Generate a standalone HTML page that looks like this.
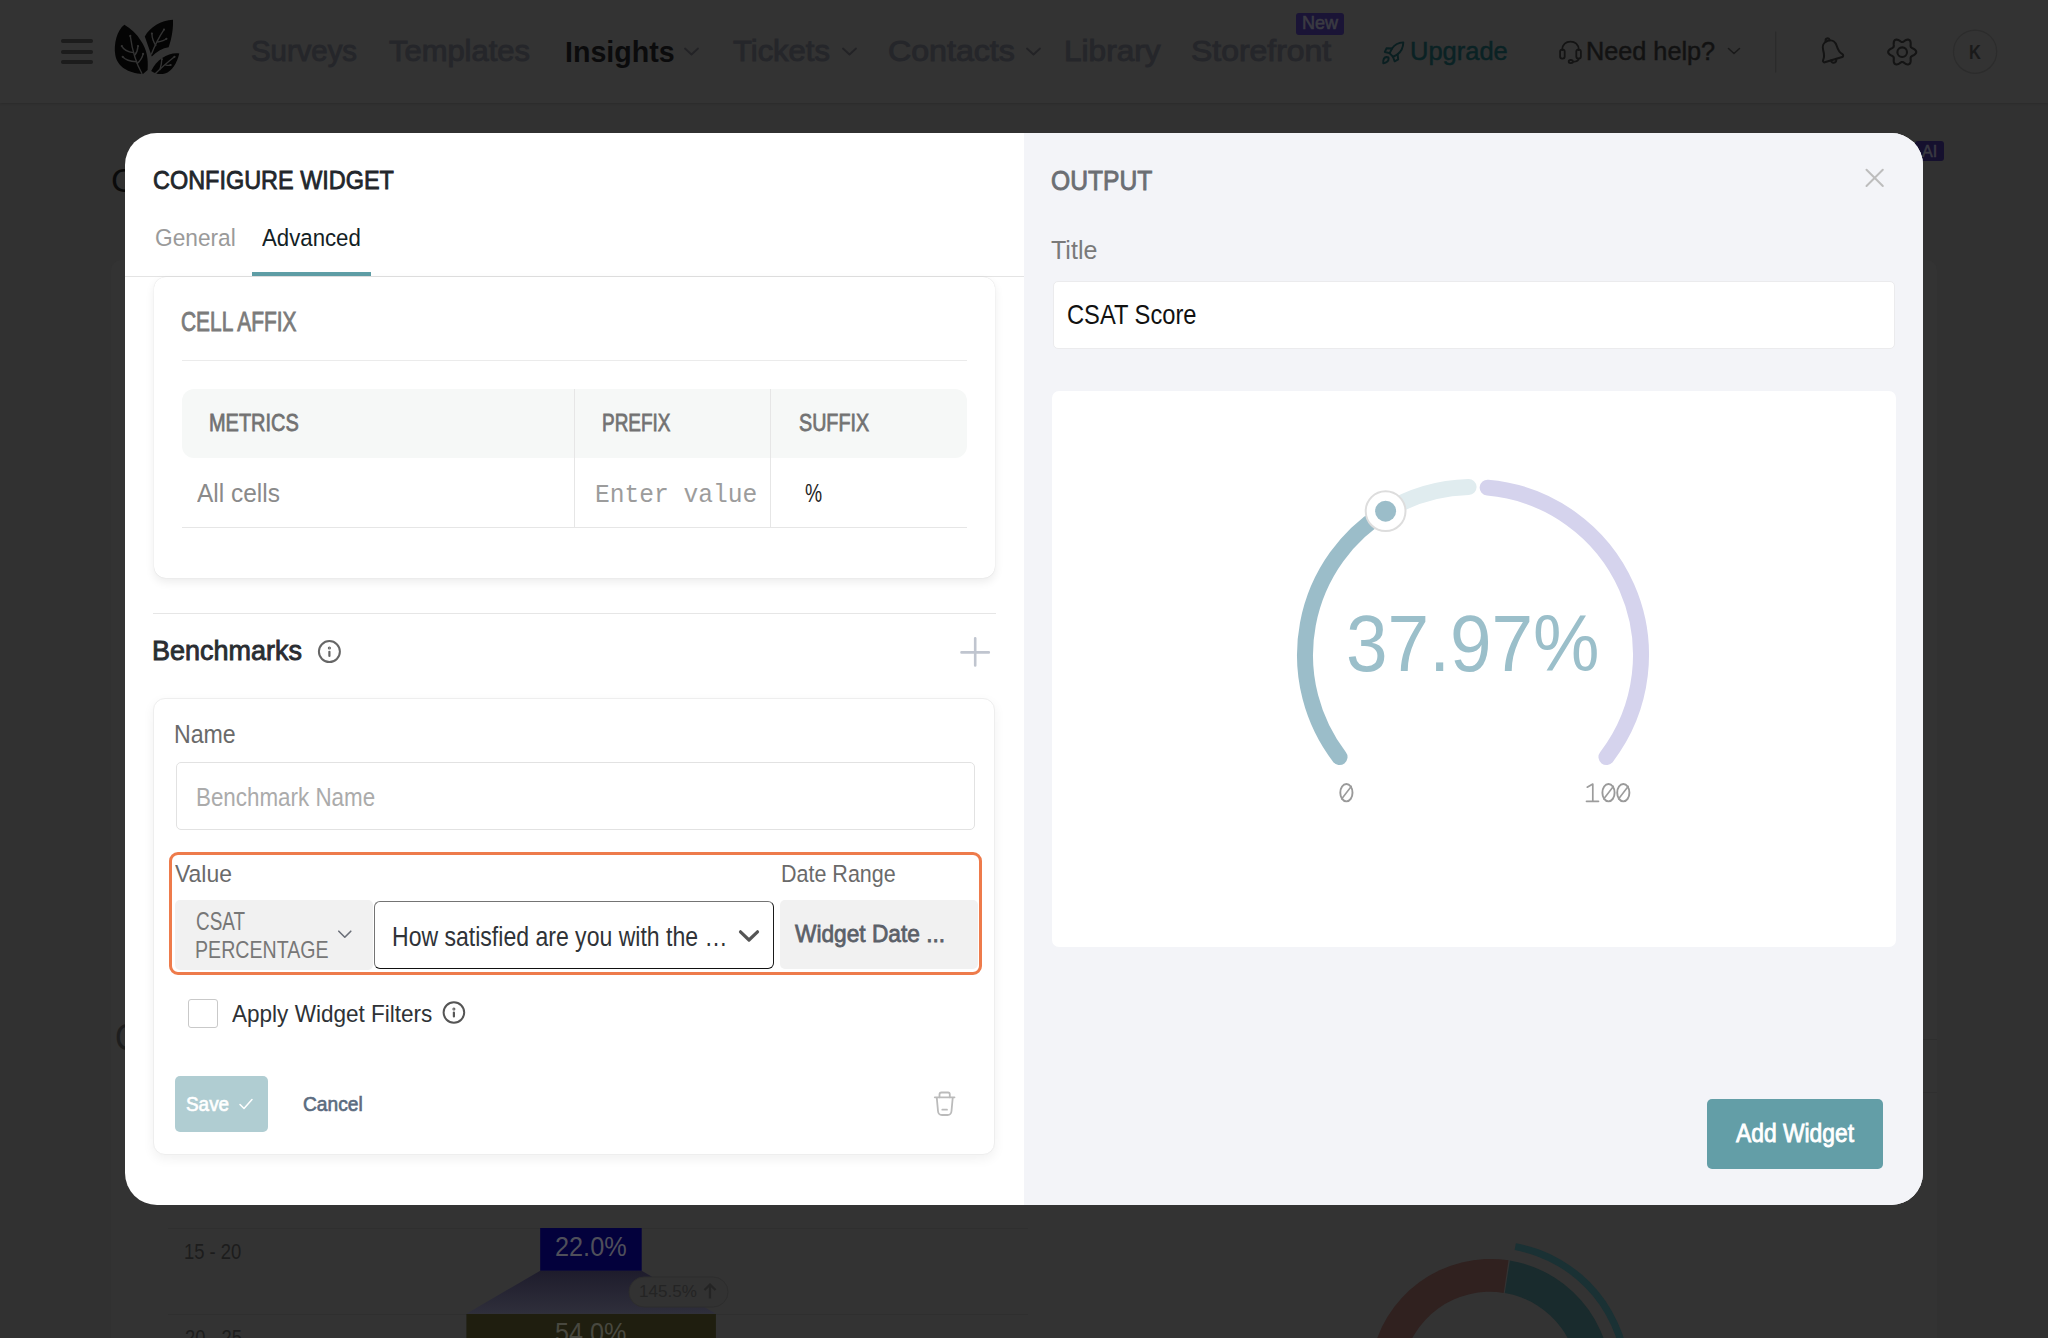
<!DOCTYPE html>
<html><head><meta charset="utf-8">
<style>
html,body{margin:0;padding:0;}
body{width:2048px;height:1338px;overflow:hidden;position:relative;background:#313131;font-family:"Liberation Sans",sans-serif;}
.a{position:absolute;box-sizing:border-box;}
.t{position:absolute;white-space:pre;line-height:1;transform-origin:0 0;}
svg.a{overflow:visible;}
</style></head><body>
<!-- ===== background page (under overlay) ===== -->
<div class="a" style="left:0;top:0;width:2048px;height:103px;background:#333333;box-shadow:0 1px 2px rgba(0,0,0,0.12)"></div>
<div class="a" style="left:111px;top:260px;width:1826px;height:1090px;background:#333333;border-radius:10px"></div>
<div class="a" style="left:1923px;top:1039px;width:14px;height:1px;background:#2e2e2e"></div>
<div class="a" style="left:1923px;top:1092px;width:14px;height:1px;background:#2f2f2f"></div>
<!-- hamburger -->
<div class="a" style="left:61px;top:39px;width:32px;height:4px;border-radius:2px;background:#1c1c1c"></div>
<div class="a" style="left:61px;top:49.5px;width:32px;height:4px;border-radius:2px;background:#1c1c1c"></div>
<div class="a" style="left:61px;top:60px;width:32px;height:4px;border-radius:2px;background:#1c1c1c"></div>
<!-- logo -->
<svg class="a" style="left:0;top:0" width="2048" height="103" viewBox="0 0 2048 103">
 <g fill="#040404">
  <path d="M124.4,24.7 C117,30 113.5,44 115.3,55 C117,66 128,73.5 143,74 L147.6,70 C148.5,58 146.5,49 141,41 C137,34 131,28.5 124.4,24.7 Z"/>
  <path d="M173,19.8 C161,20.5 150,27 144.8,36.5 L151.8,56.5 C157,51 162.5,48 168.6,47.2 C172,38 173.3,28 173,19.8 Z"/>
  <path d="M179.3,53.4 C169,52 157,58.5 151.2,71 C155,74 160,74.8 165,73.5 C172,71 177,63 179.3,53.4 Z"/>
 </g>
 <g stroke="#333" stroke-width="1.4" fill="none" stroke-linecap="round">
  <path d="M141.9,73.5 Q133.2,58 130.3,36"/>
  <path d="M133.5,52.6 C128,52 123.5,49.5 121.8,46.1"/>
  <path d="M136.5,61.8 C130,61.5 125,59.5 122.7,56.8"/>
  <path d="M134.6,55.3 C136.5,53 137.8,49.5 138,46.1"/>
  <path d="M137.2,63.6 C140,61 142.5,57 143.1,53.9"/>
  <path d="M151.5,54 C155,45 159,37 164,29.6"/>
  <path d="M155.8,45.5 C153.5,42 152,37.5 151.9,33.5"/>
  <path d="M157.8,42 C161,41.5 164.5,40.5 166.4,38.8"/>
  <path d="M155.5,73.5 C162,67 168,62 174.5,56.8"/>
  <path d="M159.9,69.6 C161,66 161.8,62 161.8,59.2"/>
  <path d="M165.5,64.8 C167.5,65.5 169.2,65.5 170.6,65"/>
 </g>
 <g fill="#333">
  <circle cx="130.3" cy="35.9" r="1.1"/><circle cx="121.8" cy="46.1" r="1.1"/><circle cx="122.7" cy="56.8" r="1.1"/>
  <circle cx="138" cy="46.1" r="1.1"/><circle cx="143.1" cy="53.9" r="1.1"/><circle cx="151.9" cy="33.5" r="1.1"/>
  <circle cx="164" cy="29.6" r="1.1"/><circle cx="166.4" cy="38.8" r="1.1"/><circle cx="174.5" cy="56.8" r="1.1"/>
  <circle cx="161.8" cy="59.2" r="1.1"/><circle cx="170.6" cy="65" r="1.1"/>
 </g>
</svg>
<!-- nav chevrons -->
<svg class="a" style="left:0;top:0" width="2048" height="103" viewBox="0 0 2048 103" fill="none" stroke-linecap="round" stroke-linejoin="round">
 <path d="M685,48.5 L691.5,54.5 L698,48.5" stroke="#232326" stroke-width="1.8"/>
 <path d="M843,48.5 L849.5,54.5 L856,48.5" stroke="#232326" stroke-width="1.8"/>
 <path d="M1027,48.5 L1033.5,54.5 L1040,48.5" stroke="#232326" stroke-width="1.8"/>
 <path d="M1728.5,48.5 L1734,53.5 L1739.5,48.5" stroke="#1a1a1a" stroke-width="1.6"/>
 <!-- rocket -->
 <g stroke="#0a1f21" stroke-width="1.9">
  <path d="M1403.3,42.4 C1398,42.6 1394.5,45 1392,48.5 L1389.6,53.2 L1393,56.8 L1397.6,54.3 C1401,51.5 1403.2,47.5 1403.3,42.4 Z"/>
  <path d="M1392,48.5 L1386.6,48.2 L1384.8,52 L1389.6,53.2"/>
  <path d="M1397.6,54.3 L1398.2,59.3 L1394.6,61.3 L1393,56.8"/>
  <path d="M1388.6,58.4 C1388.6,60.6 1387.2,62.6 1383.2,63.2 C1383,59.6 1384.6,57.2 1386.6,57 C1387.8,57 1388.6,57.6 1388.6,58.4 Z"/>
 </g>
 <!-- headset -->
 <g stroke="#141414" stroke-width="1.8">
  <path d="M1562.3,50 L1562.3,49.5 C1562.3,44.5 1566,41.6 1570.5,41.6 C1575,41.6 1578.7,44.5 1578.7,49.5 L1578.7,50"/>
  <rect x="1560.1" y="49.6" width="4.6" height="9" rx="2"/>
  <rect x="1576.3" y="49.6" width="4.6" height="9" rx="2"/>
  <path d="M1578.6,58.6 C1578.6,60.8 1576.5,61.8 1573,61.8"/>
  <ellipse cx="1570.8" cy="61.6" rx="2.1" ry="1.6"/>
 </g>
 <!-- divider -->
 <rect x="1775" y="31.6" width="1.2" height="41" fill="#2b2b2b" stroke="none"/>
 <!-- bell -->
 <g stroke="#141414" stroke-width="1.9" transform="translate(1830.8,50.8) rotate(-17) scale(1.05)">
  <path d="M0,-10 C-4.5,-10 -6.8,-6.5 -6.8,-2.5 C-6.8,1.5 -7.8,4.3 -9.6,6.3 C-10.4,7.2 -9.9,8.8 -8.7,8.8 L8.7,8.8 C9.9,8.8 10.4,7.2 9.6,6.3 C7.8,4.3 6.8,1.5 6.8,-2.5 C6.8,-6.5 4.5,-10 0,-10 Z"/>
  <path d="M-2,-9.9 C-2,-11.2 -1.1,-12.3 0,-12.3 C1.1,-12.3 2,-11.2 2,-9.9"/>
  <path d="M-2.6,8.9 C-2.6,10.5 -1.4,11.8 0,11.8 C1.4,11.8 2.6,10.5 2.6,8.9"/>
 </g>
 <!-- gear -->
 <g stroke="#141414" stroke-width="2.1">
  <path d="M1916.20,52.00 L1916.08,52.73 L1915.74,53.42 L1915.21,54.06 L1914.54,54.62 L1913.79,55.11 L1913.02,55.52 L1912.31,55.88 L1911.68,56.22 L1911.20,56.58 L1910.86,57.00 L1910.67,57.50 L1910.60,58.10 L1910.61,58.81 L1910.66,59.62 L1910.69,60.49 L1910.64,61.38 L1910.49,62.24 L1910.20,63.02 L1909.77,63.66 L1909.20,64.12 L1908.51,64.39 L1907.74,64.44 L1906.92,64.30 L1906.10,64.00 L1905.31,63.59 L1904.57,63.13 L1903.89,62.69 L1903.29,62.33 L1902.73,62.08 L1902.20,62.00 L1901.67,62.08 L1901.11,62.33 L1900.51,62.69 L1899.83,63.13 L1899.09,63.59 L1898.30,64.00 L1897.48,64.30 L1896.66,64.44 L1895.89,64.39 L1895.20,64.12 L1894.63,63.66 L1894.20,63.02 L1893.91,62.24 L1893.76,61.38 L1893.71,60.49 L1893.74,59.62 L1893.79,58.81 L1893.80,58.10 L1893.73,57.50 L1893.54,57.00 L1893.20,56.58 L1892.72,56.22 L1892.09,55.88 L1891.38,55.52 L1890.61,55.11 L1889.86,54.62 L1889.19,54.06 L1888.66,53.42 L1888.32,52.73 L1888.20,52.00 L1888.32,51.27 L1888.66,50.58 L1889.19,49.94 L1889.86,49.38 L1890.61,48.89 L1891.38,48.48 L1892.09,48.12 L1892.72,47.78 L1893.20,47.42 L1893.54,47.00 L1893.73,46.50 L1893.80,45.90 L1893.79,45.19 L1893.74,44.38 L1893.71,43.51 L1893.76,42.62 L1893.91,41.76 L1894.20,40.98 L1894.63,40.34 L1895.20,39.88 L1895.89,39.61 L1896.66,39.56 L1897.48,39.70 L1898.30,40.00 L1899.09,40.41 L1899.83,40.87 L1900.51,41.31 L1901.11,41.67 L1901.67,41.92 L1902.20,42.00 L1902.73,41.92 L1903.29,41.67 L1903.89,41.31 L1904.57,40.87 L1905.31,40.41 L1906.10,40.00 L1906.92,39.70 L1907.74,39.56 L1908.51,39.61 L1909.20,39.88 L1909.77,40.34 L1910.20,40.98 L1910.49,41.76 L1910.64,42.62 L1910.69,43.51 L1910.66,44.38 L1910.61,45.19 L1910.60,45.90 L1910.67,46.50 L1910.86,47.00 L1911.20,47.42 L1911.68,47.78 L1912.31,48.12 L1913.02,48.48 L1913.79,48.89 L1914.54,49.38 L1915.21,49.94 L1915.74,50.58 L1916.08,51.27 Z"/>
  <circle cx="1902.2" cy="52.2" r="4.8"/>
 </g>
 <!-- avatar -->
 <circle cx="1975.1" cy="51.7" r="21.6" stroke="#2c2c2c" stroke-width="1.2" fill="#333333"/>
</svg>
<!-- New badge -->
<div class="a" style="left:1296px;top:13.2px;width:48.3px;height:21.7px;border-radius:3px;background:#1a1436"></div>
<!-- AI badge -->
<div class="a" style="left:1915px;top:141px;width:29px;height:20px;border-radius:3px;background:#15102e"></div>
<!-- bottom-left table -->
<div class="a" style="left:168px;top:1227.5px;width:860px;height:1px;background:#2f2f2f"></div>
<div class="a" style="left:168px;top:1313.5px;width:860px;height:1px;background:#2f2f2f"></div>
<svg class="a" style="left:0;top:0" width="2048" height="1338" viewBox="0 0 2048 1338">
 <defs>
  <linearGradient id="fun" x1="0" y1="0" x2="0" y2="1">
   <stop offset="0" stop-color="#1e1c2c"/><stop offset="1" stop-color="#2f2f3b"/>
  </linearGradient>
 </defs>
 <path d="M540.2,1270.7 L641.7,1270.7 L715.9,1313.8 L466.4,1313.8 Z" fill="url(#fun)"/>
 <rect x="540.2" y="1228" width="101.5" height="42.7" fill="#03013c"/>
 <rect x="466.4" y="1314" width="249.5" height="30" fill="#1f1e0f"/>
 <rect x="629" y="1277" width="99" height="30" rx="15" fill="#323232" stroke="#2d2d2d" stroke-width="1"/>
 <path d="M710,1298.5 L710,1284.5 M704.5,1290 L710,1284.5 L715.5,1290" stroke="#242424" stroke-width="2.2" fill="none"/>
 <!-- donut -->
 <path d="M1470.0,1499.2 A121,121 0 0 1 1508.5,1260.3 L1503.7,1292.9 A88,88 0 0 0 1475.7,1466.7 Z" fill="#30211f"/>
 <path d="M1509.9,1260.5 A121,121 0 1 1 1470.0,1499.2 L1475.7,1466.7 A88,88 0 1 0 1504.8,1293.1 Z" fill="#192b2d"/>
 <path d="M1515.9,1243.2 A139,139 0 0 1 1515.1,1516.9 L1513.9,1510.0 A132,132 0 0 0 1514.6,1250.1 Z" fill="#1a3134"/>
</svg>

<span class="t" style="left:251.2px;top:37.0px;font-size:29.07px;font-weight:400;color:#25262a;font-family:'Liberation Sans',sans-serif;transform:scaleX(1.0096);-webkit-text-stroke:0.93px #25262a">Surveys</span>
<span class="t" style="left:388.9px;top:37.0px;font-size:29.07px;font-weight:400;color:#25262a;font-family:'Liberation Sans',sans-serif;transform:scaleX(1.0636);-webkit-text-stroke:0.93px #25262a">Templates</span>
<span class="t" style="left:565.1px;top:38.0px;font-size:29.07px;font-weight:700;color:#0b0b0c;font-family:'Liberation Sans',sans-serif;transform:scaleX(0.9843)">Insights</span>
<span class="t" style="left:732.5px;top:37.0px;font-size:29.07px;font-weight:400;color:#25262a;font-family:'Liberation Sans',sans-serif;transform:scaleX(1.0648);-webkit-text-stroke:0.93px #25262a">Tickets</span>
<span class="t" style="left:887.7px;top:37.0px;font-size:29.07px;font-weight:400;color:#25262a;font-family:'Liberation Sans',sans-serif;transform:scaleX(1.1062);-webkit-text-stroke:0.93px #25262a">Contacts</span>
<span class="t" style="left:1063.8px;top:37.0px;font-size:29.07px;font-weight:400;color:#25262a;font-family:'Liberation Sans',sans-serif;transform:scaleX(1.0874);-webkit-text-stroke:0.93px #25262a">Library</span>
<span class="t" style="left:1191.4px;top:37.0px;font-size:29.07px;font-weight:400;color:#25262a;font-family:'Liberation Sans',sans-serif;transform:scaleX(1.0984);-webkit-text-stroke:0.93px #25262a">Storefront</span>
<span class="t" style="left:1301.9px;top:13.8px;font-size:18.17px;font-weight:400;color:#3b3b42;font-family:'Liberation Sans',sans-serif;transform:scaleX(0.9917);-webkit-text-stroke:0.58px #3b3b42">New</span>
<span class="t" style="left:1409.5px;top:39.8px;font-size:24.85px;font-weight:400;color:#0a2224;font-family:'Liberation Sans',sans-serif;transform:scaleX(1.0258);-webkit-text-stroke:0.45px #0a2224">Upgrade</span>
<span class="t" style="left:1586.4px;top:39.8px;font-size:24.85px;font-weight:400;color:#121212;font-family:'Liberation Sans',sans-serif;transform:scaleX(1.0160);-webkit-text-stroke:0.45px #121212">Need help?</span>
<span class="t" style="left:1968.9px;top:41.8px;font-size:20.93px;font-weight:700;color:#1a1a1a;font-family:'Liberation Sans',sans-serif;transform:scaleX(0.7857)">K</span>
<span class="t" style="left:1922.0px;top:144.1px;font-size:15.7px;font-weight:400;color:#3a3a42;font-family:'Liberation Sans',sans-serif;transform:scaleX(1.0286);-webkit-text-stroke:0.5px #3a3a42">AI</span>
<span class="t" style="left:110.9px;top:165.0px;font-size:32.7px;font-weight:400;color:#0a0a0a;font-family:'Liberation Sans',sans-serif;transform:scaleX(1.0500)">C</span>
<span class="t" style="left:115.2px;top:1020.0px;font-size:36.34px;font-weight:400;color:#1e1e1e;font-family:'Liberation Sans',sans-serif;transform:scaleX(0.9130)">C</span>
<span class="t" style="left:183.7px;top:1240.8px;font-size:21.95px;font-weight:400;color:#1c1c1c;font-family:'Liberation Sans',sans-serif;transform:scaleX(0.8394)">15 - 20</span>
<span class="t" style="left:555.1px;top:1233.4px;font-size:27.33px;font-weight:400;color:#4f4f5a;font-family:'Liberation Sans',sans-serif;transform:scaleX(0.9250)">22.0%</span>
<span class="t" style="left:639.4px;top:1283.2px;font-size:17.3px;font-weight:400;color:#242424;font-family:'Liberation Sans',sans-serif;transform:scaleX(0.9895)">145.5%</span>
<span class="t" style="left:184.6px;top:1327.0px;font-size:21.8px;font-weight:400;color:#1c1c1c;font-family:'Liberation Sans',sans-serif;transform:scaleX(0.8394)">20 - 25</span>
<span class="t" style="left:555.1px;top:1319.0px;font-size:27.62px;font-weight:400;color:#48483f;font-family:'Liberation Sans',sans-serif;transform:scaleX(0.9130)">54.0%</span>
<!-- ===== modal ===== -->
<div class="a" style="left:125px;top:133px;width:1798px;height:1072px;border-radius:32px;overflow:hidden;background:#ffffff">
 <div class="a" style="left:899px;top:0;width:899px;height:1072px;background:#f3f4f8"></div>
</div>
<!-- left panel -->
<div class="a" style="left:125px;top:276px;width:899px;height:1px;background:#e4e4e4"></div>
<div class="a" style="left:252px;top:272px;width:118.7px;height:4px;background:#5f9ea6"></div>
<!-- cell affix card -->
<div class="a" style="left:153.6px;top:276.6px;width:841.4px;height:301px;border-radius:12px;background:#fff;box-shadow:0 0 1px rgba(0,0,0,0.16),0 4px 10px rgba(0,0,0,0.08)"></div>
<div class="a" style="left:182px;top:360px;width:784.5px;height:1px;background:#ebebeb"></div>
<div class="a" style="left:182px;top:388.6px;width:784.5px;height:69.4px;border-radius:12px;background:#f6f8f7"></div>
<div class="a" style="left:574px;top:388.6px;width:1px;height:138.4px;background:#e6e6e6"></div>
<div class="a" style="left:770px;top:388.6px;width:1px;height:138.4px;background:#e6e6e6"></div>
<div class="a" style="left:182px;top:526.5px;width:784.5px;height:1px;background:#e6e6e6"></div>
<!-- benchmarks -->
<div class="a" style="left:153px;top:612.5px;width:843px;height:1px;background:#e6e6e6"></div>
<svg class="a" style="left:0;top:0" width="2048" height="1338" viewBox="0 0 2048 1338" fill="none" stroke-linecap="round" stroke-linejoin="round">
 <circle cx="329.4" cy="651.6" r="10.5" stroke="#666" stroke-width="2"/>
 <circle cx="329.4" cy="648" r="0.6" stroke="#666" stroke-width="2"/>
 <path d="M329.4,651.8 L329.4,656" stroke="#666" stroke-width="2.2"/>
 <path d="M961.5,652.4 L988.8,652.4 M975.2,638.3 L975.2,665.5" stroke="#c0c5cf" stroke-width="2.6"/>
</svg>
<div class="a" style="left:152.7px;top:697.8px;width:842.3px;height:457.2px;border-radius:12px;background:#fff;border:1px solid #eeeeee;box-shadow:0 4px 12px rgba(0,0,0,0.06)"></div>
<div class="a" style="left:175.5px;top:762.3px;width:799px;height:68.1px;border-radius:5px;background:#fff;border:1px solid #e2e2e2"></div>
<div class="a" style="left:169px;top:852.3px;width:812.8px;height:123px;border-radius:9px;border:3px solid #ee7b4b"></div>
<div class="a" style="left:174.7px;top:900.4px;width:198px;height:69.3px;border-radius:5px;background:#f1f1f1"></div>
<div class="a" style="left:373.9px;top:901px;width:399.7px;height:67.8px;border-radius:6px;background:#fff;border:1.7px solid;border-color:#747474 #1a1a1a #111 #747474"></div>
<div class="a" style="left:780px;top:900.4px;width:198.2px;height:68.9px;border-radius:5px;background:#f1f1f1"></div>
<div class="a" style="left:188.2px;top:999.2px;width:29.5px;height:28.5px;border-radius:3px;background:#fff;border:1px solid #c9c9c9"></div>
<div class="a" style="left:174.9px;top:1076.2px;width:93px;height:55.8px;border-radius:5px;background:#b0cdd2"></div>
<svg class="a" style="left:0;top:0" width="2048" height="1338" viewBox="0 0 2048 1338" fill="none" stroke-linecap="round" stroke-linejoin="round">
 <path d="M338.8,931.2 L344.8,937.2 L350.8,931.2" stroke="#6b6f78" stroke-width="1.6"/>
 <path d="M740.5,931.8 L749,940 L757.5,931.8" stroke="#555" stroke-width="3.2"/>
 <circle cx="453.9" cy="1012.5" r="10.3" stroke="#555" stroke-width="2"/>
 <circle cx="453.9" cy="1009" r="0.5" stroke="#555" stroke-width="2"/>
 <path d="M453.9,1012.5 L453.9,1016.5" stroke="#555" stroke-width="2.2"/>
 <path d="M240,1104.5 L244,1108.5 L252,1099.5" stroke="#fff" stroke-width="1.5"/>
 <!-- trash -->
 <g stroke="#bbbbbb" stroke-width="1.8">
  <path d="M934.8,1097.3 L954.5,1097.3"/>
  <path d="M939.5,1097.3 L939.5,1094.5 C939.5,1093 940.5,1092.5 941.5,1092.5 L948,1092.5 C949,1092.5 949.8,1093 949.8,1094.5 L949.8,1097.3"/>
  <path d="M936.8,1098 L938,1111 C938.2,1113.5 939.5,1115 942,1115 L947.5,1115 C950,1115 951.3,1113.5 951.5,1111 L952.7,1098"/>
  <path d="M942.3,1109.7 L947,1109.7"/>
 </g>
 <!-- close X -->
 <path d="M1866.5,169.7 L1882.8,186 M1882.8,169.7 L1866.5,186" stroke="#bdbdbd" stroke-width="2"/>
</svg>
<!-- right panel -->
<div class="a" style="left:1052.5px;top:280.5px;width:842.5px;height:68px;border-radius:5px;background:#fff;border:1px solid #ebebed"></div>
<div class="a" style="left:1052px;top:390.8px;width:844px;height:556.4px;border-radius:7px;background:#fff"></div>
<svg class="a" style="left:0;top:0" width="2048" height="1338" viewBox="0 0 2048 1338" fill="none" stroke-linecap="round">
 <path d="M1339.54,757.04 A168,168 0 0 1 1385.72,511.45" stroke="#9bbdc9" stroke-width="16"/>
 <path d="M1385.72,511.45 A168,168 0 0 1 1468.60,487.06" stroke="#e0ecef" stroke-width="16"/>
 <path d="M1487.64,487.64 A168,168 0 0 1 1606.46,757.04" stroke="#d5d3ed" stroke-width="16"/>
 <circle cx="1385.6" cy="511.2" r="19.9" fill="#fff" stroke="#dddddd" stroke-width="2"/>
 <circle cx="1385.6" cy="511.2" r="10.5" fill="#9bbdc9"/>
 <ellipse cx="1346.4" cy="792.7" rx="6.1" ry="8.7" stroke="#9a9a9a" stroke-width="1.9" fill="none"/><path d="M1341.8000000000002,798.8 L1351.2,786.4" stroke="#9c9c9c" stroke-width="1.6"/>
 <ellipse cx="1608.5" cy="792.7" rx="6.1" ry="8.7" stroke="#9a9a9a" stroke-width="1.9" fill="none"/><path d="M1603.9,798.8 L1613.3,786.4" stroke="#9c9c9c" stroke-width="1.6"/>
 <ellipse cx="1623.3" cy="792.7" rx="6.1" ry="8.7" stroke="#9a9a9a" stroke-width="1.9" fill="none"/><path d="M1618.7,798.8 L1628.1,786.4" stroke="#9c9c9c" stroke-width="1.6"/>
 <path d="M1586.5,801.3 L1598.5,801.3 M1592.8,801.3 L1592.8,784 L1587.2,787.2" stroke="#9c9c9c" stroke-width="1.7" fill="none" stroke-linejoin="round"/>
</svg>
<div class="a" style="left:1707px;top:1099px;width:176px;height:70.4px;border-radius:5px;background:#639ea7"></div>
<span class="t" style="left:153.0px;top:167.8px;font-size:25.87px;font-weight:400;color:#22262b;font-family:'Liberation Sans',sans-serif;transform:scaleX(0.9064);-webkit-text-stroke:0.83px #22262b">CONFIGURE WIDGET</span>
<span class="t" style="left:155.4px;top:227.0px;font-size:23.55px;font-weight:400;color:#9a9a9a;font-family:'Liberation Sans',sans-serif;transform:scaleX(0.9642)">General</span>
<span class="t" style="left:261.6px;top:227.0px;font-size:23.55px;font-weight:400;color:#122124;font-family:'Liberation Sans',sans-serif;transform:scaleX(0.9433)">Advanced</span>
<span class="t" style="left:181.2px;top:308.5px;font-size:26.89px;font-weight:400;color:#7b7b7b;font-family:'Liberation Sans',sans-serif;transform:scaleX(0.7782);-webkit-text-stroke:0.86px #7b7b7b">CELL AFFIX</span>
<span class="t" style="left:209.0px;top:410.7px;font-size:24.27px;font-weight:400;color:#727272;font-family:'Liberation Sans',sans-serif;transform:scaleX(0.8222);-webkit-text-stroke:0.78px #727272">METRICS</span>
<span class="t" style="left:602.2px;top:410.7px;font-size:24.27px;font-weight:400;color:#727272;font-family:'Liberation Sans',sans-serif;transform:scaleX(0.7816);-webkit-text-stroke:0.78px #727272">PREFIX</span>
<span class="t" style="left:798.7px;top:410.7px;font-size:24.27px;font-weight:400;color:#727272;font-family:'Liberation Sans',sans-serif;transform:scaleX(0.8118);-webkit-text-stroke:0.78px #727272">SUFFIX</span>
<span class="t" style="left:196.6px;top:480.6px;font-size:25.58px;font-weight:400;color:#8a8a8a;font-family:'Liberation Sans',sans-serif;transform:scaleX(0.9558)">All cells</span>
<span class="t" style="left:594.5px;top:482.6px;font-size:25.19px;font-weight:400;color:#9c9c9c;font-family:'Liberation Mono',monospace;transform:scaleX(0.9761)">Enter value</span>
<span class="t" style="left:805.2px;top:481.6px;font-size:24.85px;font-weight:400;color:#1e1e1e;font-family:'Liberation Sans',sans-serif;transform:scaleX(0.7750)">%</span>
<span class="t" style="left:151.7px;top:637.2px;font-size:28.05px;font-weight:400;color:#2a2d31;font-family:'Liberation Sans',sans-serif;transform:scaleX(0.9621);-webkit-text-stroke:0.9px #2a2d31">Benchmarks</span>
<span class="t" style="left:173.7px;top:722.0px;font-size:25.73px;font-weight:400;color:#6a6a6a;font-family:'Liberation Sans',sans-serif;transform:scaleX(0.9000)">Name</span>
<span class="t" style="left:195.8px;top:785.2px;font-size:25.58px;font-weight:400;color:#ababab;font-family:'Liberation Sans',sans-serif;transform:scaleX(0.8748)">Benchmark Name</span>
<span class="t" style="left:174.7px;top:861.7px;font-size:24.27px;font-weight:400;color:#6a6a6a;font-family:'Liberation Sans',sans-serif;transform:scaleX(0.9458)">Value</span>
<span class="t" style="left:781.0px;top:861.7px;font-size:24.27px;font-weight:400;color:#6a6a6a;font-family:'Liberation Sans',sans-serif;transform:scaleX(0.8858)">Date Range</span>
<span class="t" style="left:195.5px;top:909.0px;font-size:25.44px;font-weight:400;color:#777777;font-family:'Liberation Sans',sans-serif;transform:scaleX(0.7431)">CSAT</span>
<span class="t" style="left:194.6px;top:937.8px;font-size:24.42px;font-weight:400;color:#777777;font-family:'Liberation Sans',sans-serif;transform:scaleX(0.8031)">PERCENTAGE</span>
<span class="t" style="left:392.2px;top:923.5px;font-size:26.89px;font-weight:400;color:#2f3337;font-family:'Liberation Sans',sans-serif;transform:scaleX(0.8573)">How satisfied are you with the …</span>
<span class="t" style="left:794.9px;top:922.1px;font-size:24.27px;font-weight:400;color:#5b6068;font-family:'Liberation Sans',sans-serif;transform:scaleX(0.9352);-webkit-text-stroke:0.78px #5b6068">Widget Date ...</span>
<span class="t" style="left:232.0px;top:1002.6px;font-size:23.11px;font-weight:400;color:#2e3236;font-family:'Liberation Sans',sans-serif;transform:scaleX(0.9751)">Apply Widget Filters</span>
<span class="t" style="left:186.0px;top:1094.0px;font-size:20.06px;font-weight:400;color:#ffffff;font-family:'Liberation Sans',sans-serif;transform:scaleX(0.9432);-webkit-text-stroke:0.64px #ffffff">Save</span>
<span class="t" style="left:302.9px;top:1094.0px;font-size:20.49px;font-weight:400;color:#5b6b80;font-family:'Liberation Sans',sans-serif;transform:scaleX(0.9355);-webkit-text-stroke:0.66px #5b6b80">Cancel</span>
<span class="t" style="left:1051.4px;top:166.6px;font-size:28.05px;font-weight:400;color:#6b6e73;font-family:'Liberation Sans',sans-serif;transform:scaleX(0.8789);-webkit-text-stroke:0.9px #6b6e73">OUTPUT</span>
<span class="t" style="left:1051.3px;top:237.4px;font-size:26.16px;font-weight:400;color:#7a7a7a;font-family:'Liberation Sans',sans-serif;transform:scaleX(0.9574)">Title</span>
<span class="t" style="left:1066.8px;top:301.4px;font-size:27.33px;font-weight:400;color:#111111;font-family:'Liberation Sans',sans-serif;transform:scaleX(0.8673)">CSAT Score</span>
<span class="t" style="left:1346.2px;top:603.3px;font-size:80.52px;font-weight:400;color:#9bbfca;font-family:'Liberation Sans',sans-serif;transform:scaleX(0.9288)">37.97%</span>
<span class="t" style="left:1735.6px;top:1121.0px;font-size:25.58px;font-weight:400;color:#ffffff;font-family:'Liberation Sans',sans-serif;transform:scaleX(0.8925);-webkit-text-stroke:0.82px #ffffff">Add Widget</span>
</body></html>
